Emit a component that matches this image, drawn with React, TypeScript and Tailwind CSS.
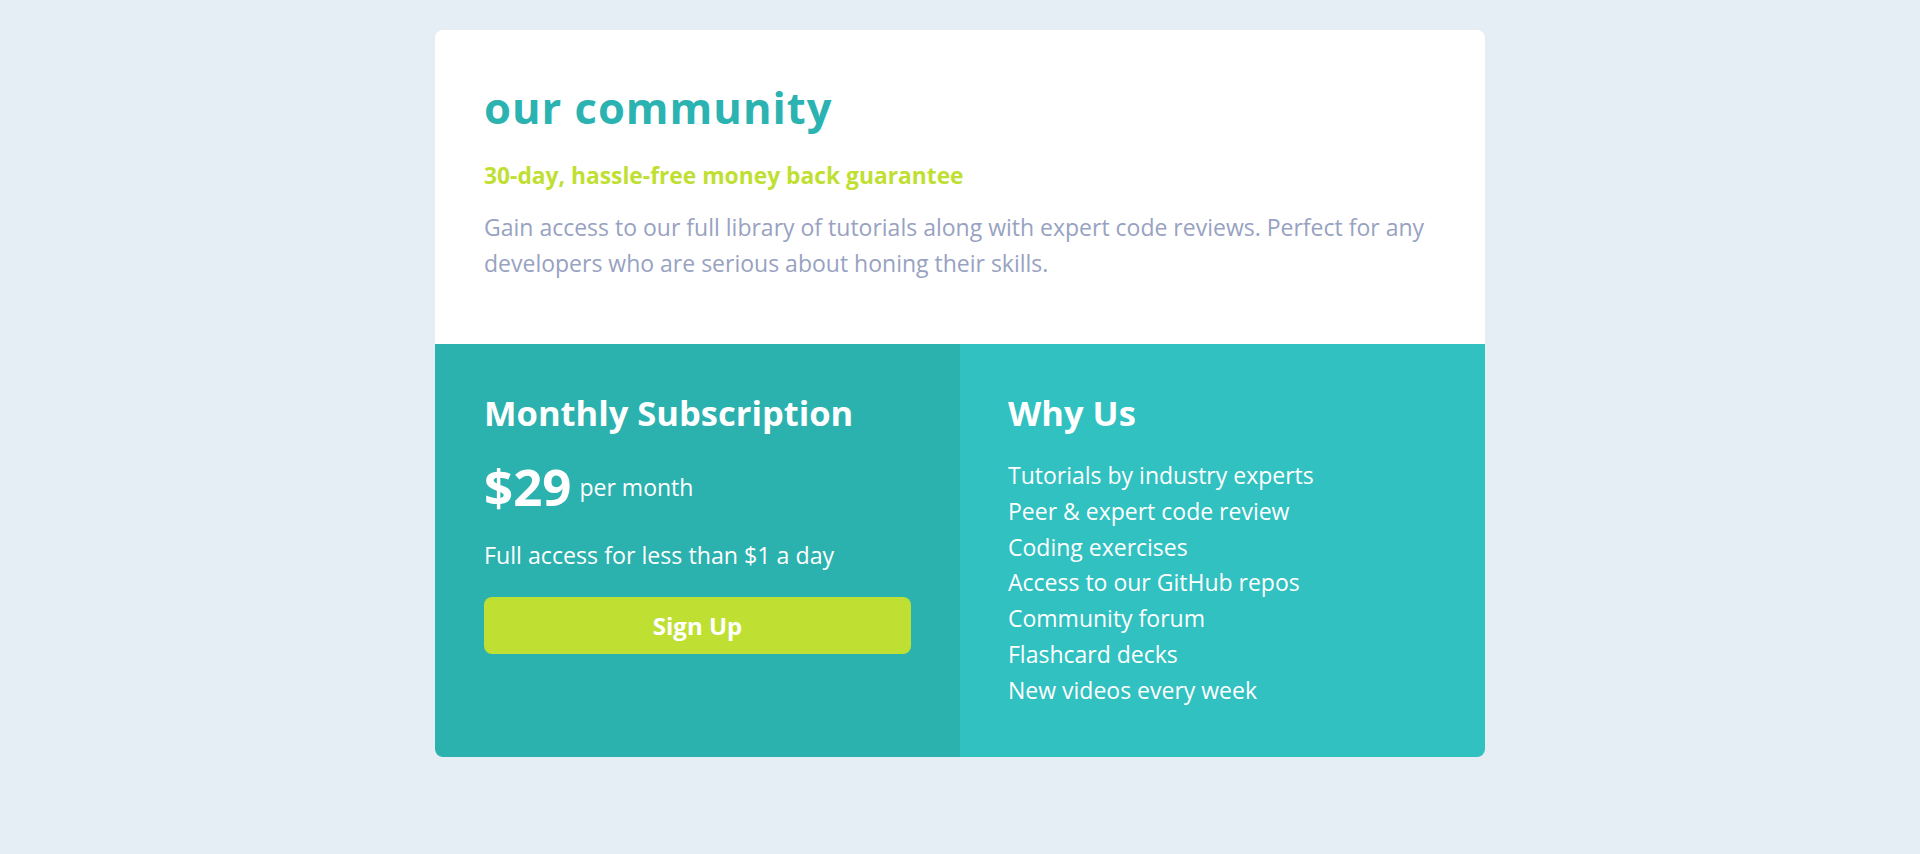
const features = [
  "Tutorials by industry experts",
  "Peer & expert code review",
  "Coding exercises",
  "Access to our GitHub repos",
  "Community forum",
  "Flashcard decks",
  "New videos every week",
];

export default function App() {
  return (
    <div className="min-h-[854px] bg-[#e5eef5] pt-[30px] font-['Open_Sans',sans-serif]">
      <div className="mx-auto w-[1050px] overflow-hidden rounded-[8px] bg-white">
        <div className="h-[314px] pl-[49px] pr-[30px] pt-[48px]">
          <h1 className="text-[43.5px] font-bold leading-[60px] tracking-[1px] text-[#2bb3b1]">
            our community
          </h1>
          <h2 className="mt-[23px] text-[22.8px] font-bold leading-[30px] text-[#bfdf32]">
            30-day, hassle-free money back guarantee
          </h2>
          <p className="mt-[19px] text-[23px] leading-[35.5px] text-[#98a2c1]">
            Gain access to our full library of tutorials along with expert code reviews. Perfect for any
            developers who are serious about honing their skills.
          </p>
        </div>

        <div className="grid h-[413px] grid-cols-2 text-white">
          <div className="bg-[#2bb1ae] px-[49px] pt-[45px]">
            <h3 className="text-[34.5px] font-bold leading-[48px]">Monthly Subscription</h3>
            <div className="mt-[21px] flex items-center gap-[8px]">
              <span className="text-[51px] font-bold leading-[56px]">$29</span>
              <span className="mt-[2px] text-[23px] leading-[30px]">per month</span>
            </div>
            <p className="mt-[26px] text-[23.2px] leading-[30px]">Full access for less than $1 a day</p>
            <button className="mt-[27px] h-[57px] w-full rounded-[8px] bg-[#bfe033] text-[24px] font-bold text-white">
              Sign Up
            </button>
          </div>

          <div className="bg-[#30c1c0] px-[48px] pt-[45px]">
            <h3 className="text-[34.5px] font-bold leading-[48px]">Why Us</h3>
            <ul className="mt-[21px] text-[23px] leading-[35.8px]">
              {features.map((f) => (
                <li key={f}>{f}</li>
              ))}
            </ul>
          </div>
        </div>
      </div>
    </div>
  );
}
